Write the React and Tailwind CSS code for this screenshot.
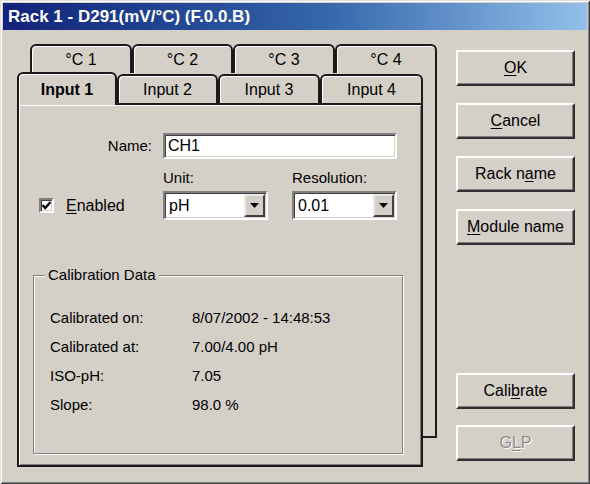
import React from "react";

const font = { fontFamily: '"Liberation Sans", Arial, sans-serif' };

function Tab({ label, bold, selected, className = "" }) {
  return (
    <div
      className={
        "flex items-center justify-center border-2 border-b-0 border-[#1a1a1a] rounded-t-[6px] bg-[#d4d0c8] shadow-[inset_1px_1px_0_#fff] text-[16px] text-black " +
        (bold ? "font-bold " : "") +
        (selected ? "relative z-10 -mb-[2px] " : "") +
        className
      }
    >
      {label}
    </div>
  );
}

function Button({ children, disabled, className = "" }) {
  return (
    <button
      className={
        "w-[119px] h-[36px] bg-[#d4d0c8] border-2 border-t-white border-l-white border-r-[#303030] border-b-[#303030] shadow-[inset_-1px_-1px_0_#808080] text-[16px] leading-none " +
        (disabled ? "text-[#8a8a8a] [text-shadow:1px_1px_0_#fff] " : "text-black ") +
        className
      }
    >
      {children}
    </button>
  );
}

function Sunken({ children, className = "" }) {
  return (
    <div
      className={
        "bg-white border-2 border-t-[#808080] border-l-[#808080] border-b-white border-r-white shadow-[inset_1px_1px_0_#404040,inset_-1px_-1px_0_#d4d0c8] " +
        className
      }
    >
      {children}
    </div>
  );
}

function Combo({ value }) {
  return (
    <Sunken className="w-[105px] h-[29px] flex items-stretch p-[1px]">
      <div className="flex-1 flex items-center pl-[3px] text-[16px] text-black">{value}</div>
      <div className="w-[21px] flex items-center justify-center bg-[#d4d0c8] border-2 border-t-[#e8e8e8] border-l-[#e8e8e8] border-r-[#404040] border-b-[#404040]">
        <svg width="9" height="5" viewBox="0 0 9 5">
          <polygon points="0,0 9,0 4.5,5" fill="#000" />
        </svg>
      </div>
    </Sunken>
  );
}

const rows = [
  ["Calibrated on:", "8/07/2002 - 14:48:53"],
  ["Calibrated at:", "7.00/4.00 pH"],
  ["ISO-pH:", "7.05"],
  ["Slope:", "98.0 %"],
];

export default function App() {
  return (
    <div
      style={font}
      className="w-[590px] h-[484px] bg-[#d4d0c8] p-[3px] flex flex-col shadow-[inset_1px_1px_0_#dfdfdf,inset_-1px_-1px_0_#404040,inset_2px_2px_0_#fff,inset_-2px_-2px_0_#808080] overflow-hidden"
    >
      {/* barra de título */}
      <div className="h-[27px] flex items-center pl-[5px] bg-linear-to-r from-[#13217a] via-[#3566aa] via-55% to-[#93c0ea]">
        <span className="text-white font-bold text-[17px] leading-none">Rack 1 - D291(mV/°C) (F.0.0.B)</span>
      </div>

      <div className="flex">
        {/* pestañas */}
        <div className="relative ml-[14px] mt-[14px] w-[420px] h-[423px]">
          <div className="absolute left-[13px] top-0 w-[407px] flex flex-col">
            <div className="flex h-[29px]">
              <Tab label="°C 1" className="w-[102px]" />
              <Tab label="°C 2" className="w-[101px]" />
              <Tab label="°C 3" className="w-[102px]" />
              <Tab label="°C 4" className="w-[102px]" />
            </div>
            <div className="h-[365px] border-2 border-t-0 border-[#1a1a1a] bg-[#d4d0c8] shadow-[inset_1px_0_0_#fff]" />
          </div>

          <div className="relative z-10 mt-[28px] w-[406px] flex flex-col">
            <div className="flex items-end h-[31px]">
              <Tab label="Input 1" bold selected className="w-[100px] h-[33px]" />
              <Tab label="Input 2" className="w-[101px] h-[29px]" />
              <Tab label="Input 3" className="w-[102px] h-[29px]" />
              <Tab label="Input 4" className="w-[103px] h-[29px]" />
            </div>
            <div className="h-[364px] border-2 border-[#1a1a1a] bg-[#d4d0c8] shadow-[inset_1px_1px_0_#fff,inset_-1px_-1px_0_#808080] flex flex-col text-[15px] text-black">
              <div className="mt-[28px] flex items-center">
                <div className="w-[133px] text-right">Name:</div>
                <Sunken className="ml-[11px] w-[234px] h-[26px] flex items-center pl-[3px] text-[16px]">CH1</Sunken>
              </div>

              <div className="mt-[10px] flex items-end">
                <div className="w-[144px] h-[29px] flex items-center pl-[20px] gap-[12px]">
                  <Sunken className="w-[15px] h-[15px] flex items-center justify-center">
                    <svg width="11" height="11" viewBox="0 0 11 11">
                      <path d="M1.5 5 L4.2 8 L9.5 2" stroke="#000" strokeWidth="2.4" fill="none" />
                    </svg>
                  </Sunken>
                  <span className="text-[16px]">
                    <span className="underline underline-offset-2">E</span>nabled
                  </span>
                </div>
                <div className="flex flex-col">
                  <div className="h-[22px] leading-[18px]">Unit:</div>
                  <Combo value="pH" />
                </div>
                <div className="flex flex-col ml-[24px]">
                  <div className="h-[22px] leading-[18px]">Resolution:</div>
                  <Combo value="0.01" />
                </div>
              </div>

              {/* datos de calibración */}
              <div className="relative mt-[55px] ml-[14px] w-[370px] h-[179px] border border-[#808080] shadow-[inset_1px_1px_0_#fff,1px_1px_0_#fff] pt-[28px] pl-[16px]">
                <span className="absolute -top-[10px] left-[11px] px-[3px] bg-[#d4d0c8] leading-[18px]">Calibration Data</span>
                {rows.map(([k, v]) => (
                  <div key={k} className="grid grid-cols-[142px_1fr] h-[29px] items-center">
                    <span>{k}</span>
                    <span>{v}</span>
                  </div>
                ))}
              </div>
            </div>
          </div>
        </div>

        {/* botones */}
        <div className="ml-[19px] mt-[20px] flex flex-col">
          <Button>
            <span className="underline underline-offset-2">O</span>K
          </Button>
          <Button className="mt-[17px]">
            <span className="underline underline-offset-2">C</span>ancel
          </Button>
          <Button className="mt-[17px]">
            Rack n<span className="underline underline-offset-2">a</span>me
          </Button>
          <Button className="mt-[17px]">
            <span className="underline underline-offset-2">M</span>odule name
          </Button>
          <Button className="mt-[128px]">
            Cali<span className="underline underline-offset-2">b</span>rate
          </Button>
          <Button disabled className="mt-[16px]">
            G<span className="underline underline-offset-2">L</span>P
          </Button>
        </div>
      </div>
    </div>
  );
}
